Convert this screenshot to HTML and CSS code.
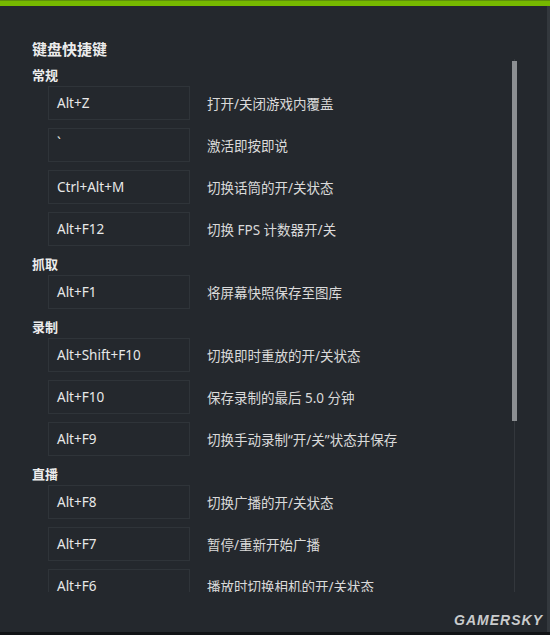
FILE: index.html
```html
<!DOCTYPE html>
<html lang="zh-CN">
<head>
  <meta charset="UTF-8">
  <title>键盘快捷键</title>
  <meta name="viewport" content="width=device-width, initial-scale=1.0">
  <link rel="stylesheet" href="styles.css">
</head>
<body>

  <div class="topbar"></div>

  <div class="panel">
    <h1 class="title">键盘快捷键</h1>

    <div class="scroller">
      <div class="list">
        <!-- 常规 -->
        <h2 class="section">常规</h2>
        <div class="row"><div class="key">Alt+Z</div><div class="desc">打开/关闭游戏内覆盖</div></div>
        <div class="row"><div class="key tick">`</div><div class="desc">激活即按即说</div></div>
        <div class="row"><div class="key">Ctrl+Alt+M</div><div class="desc">切换话筒的开/关状态</div></div>
        <div class="row"><div class="key">Alt+F12</div><div class="desc">切换 FPS 计数器开/关</div></div>

        <!-- 抓取 -->
        <h2 class="section">抓取</h2>
        <div class="row"><div class="key">Alt+F1</div><div class="desc">将屏幕快照保存至图库</div></div>

        <!-- 录制 -->
        <h2 class="section">录制</h2>
        <div class="row"><div class="key">Alt+Shift+F10</div><div class="desc">切换即时重放的开/关状态</div></div>
        <div class="row"><div class="key">Alt+F10</div><div class="desc">保存录制的最后 5.0 分钟</div></div>
        <div class="row"><div class="key">Alt+F9</div><div class="desc">切换手动录制“开/关”状态并保存</div></div>

        <!-- 直播 -->
        <h2 class="section">直播</h2>
        <div class="row"><div class="key">Alt+F8</div><div class="desc">切换广播的开/关状态</div></div>
        <div class="row"><div class="key">Alt+F7</div><div class="desc">暂停/重新开始广播</div></div>
        <div class="row"><div class="key">Alt+F6</div><div class="desc">播放时切换相机的开/关状态</div></div>
      </div>

      <div class="scrollbar">
        <div class="thumb"></div>
      </div>
    </div>
  </div>

  <div class="footer"></div>
  <div class="watermark">GAMERSKY</div>

</body>
</html>
```

FILE: styles.css
```css
body {
  margin: 0;
  width: 550px;
  height: 635px;
  overflow: hidden;
  background: #24282d;
  font-family: "Noto Sans", "Noto Sans CJK SC", sans-serif;
  color: #d8d8d8;
  display: flex;
  flex-direction: column;
  position: relative;
}

.topbar {
  height: 6px;
  background: #76b900;
  border-top: 1px solid #5f8f0a;
  box-sizing: border-box;
}

.panel {
  flex: 1;
  padding: 33px 0 0 32px;
  border-right: 3px solid #33383d;
  display: flex;
  flex-direction: column;
}

.title {
  margin: 0;
  font-size: 15px;
  line-height: 20px;
  font-weight: bold;
  color: #ececec;
}

.scroller {
  height: 533px;
  overflow: hidden;
  display: flex;
}

.list {
  width: 480px;
}

.section {
  margin: 6px 0 1px;
  font-size: 13px;
  line-height: 20px;
  font-weight: bold;
  color: #ececec;
}

.row + .section {
  margin-top: 8px;
}

.row {
  display: flex;
  align-items: center;
  margin-left: 16px;
}

.row + .row {
  margin-top: 8px;
}

.key {
  width: 142px;
  height: 34px;
  box-sizing: border-box;
  border: 1px solid #2f3439;
  padding-left: 8px;
  display: flex;
  align-items: center;
  font-size: 13.5px;
  color: #e8e8e8;
}

.key.tick {
  align-items: flex-start;
  padding-top: 5px;
}

.desc {
  margin-left: 17px;
  font-size: 13.5px;
  color: #dadada;
}

.scrollbar {
  width: 5px;
  height: 533px;
  display: flex;
  flex-direction: column;
  background: linear-gradient(to right, transparent 2px, #33373c 2px, #33373c 3px, transparent 3px);
}

.thumb {
  margin-top: 2px;
  height: 360px;
  background: #8c8f92;
}

.footer {
  height: 3px;
  background: #111316;
}

.watermark {
  position: absolute;
  right: 7px;
  bottom: 7px;
  font-family: "Liberation Sans", sans-serif;
  font-size: 14px;
  font-weight: bold;
  font-style: italic;
  letter-spacing: 1px;
  color: #c9cbcc;
}
```
